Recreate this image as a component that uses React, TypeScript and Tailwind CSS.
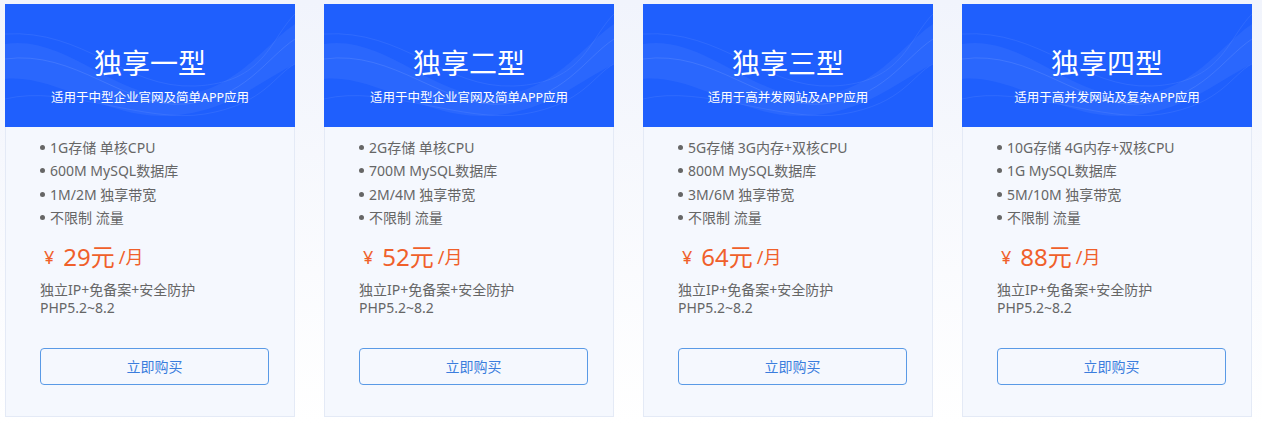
import React from "react";

interface Plan {
  name: string;
  desc: string;
  specs: string[];
  price: string;
}

const plans: Plan[] = [
  {
    name: "独享一型",
    desc: "适用于中型企业官网及简单APP应用",
    specs: ["1G存储 单核CPU", "600M MySQL数据库", "1M/2M 独享带宽", "不限制 流量"],
    price: "29",
  },
  {
    name: "独享二型",
    desc: "适用于中型企业官网及简单APP应用",
    specs: ["2G存储 单核CPU", "700M MySQL数据库", "2M/4M 独享带宽", "不限制 流量"],
    price: "52",
  },
  {
    name: "独享三型",
    desc: "适用于高并发网站及APP应用",
    specs: ["5G存储 3G内存+双核CPU", "800M MySQL数据库", "3M/6M 独享带宽", "不限制 流量"],
    price: "64",
  },
  {
    name: "独享四型",
    desc: "适用于高并发网站及复杂APP应用",
    specs: ["10G存储 4G内存+双核CPU", "1G MySQL数据库", "5M/10M 独享带宽", "不限制 流量"],
    price: "88",
  },
];

// faint light waves across the blue header
function Waves() {
  return (
    <svg
      className="absolute inset-0 h-full w-full"
      viewBox="0 0 290 123"
      preserveAspectRatio="none"
    >
      <path
        d="M0 40 C 60 30, 110 95, 170 92 S 260 40, 290 20 L290 60 C 250 80, 220 110, 160 112 S 50 70, 0 75 Z"
        fill="#ffffff"
        opacity="0.05"
      />
      <path
        d="M0 55 C 70 45, 120 105, 180 100 S 260 55, 290 35"
        stroke="#ffffff"
        strokeWidth="1"
        fill="none"
        opacity="0.1"
      />
      <path
        d="M0 30 C 80 25, 120 85, 190 82 S 265 35, 290 10"
        stroke="#ffffff"
        strokeWidth="1"
        fill="none"
        opacity="0.07"
      />
      <path
        d="M0 95 C 60 80, 140 120, 200 110 S 270 70, 290 60"
        fill="none"
        stroke="#ffffff"
        strokeWidth="1"
        opacity="0.07"
      />
    </svg>
  );
}

export default function App() {
  return (
    <div
      className="h-[424px] w-[1262px] bg-gradient-to-b from-[#f1f4fc] to-white pl-[5px] pt-[4px]"
      style={{ fontFamily: '"Noto Sans", "Noto Sans CJK SC", sans-serif' }}
    >
      <div className="flex gap-[29px]">
        {plans.map((plan) => (
          <div
            key={plan.name}
            className="w-[290px] border border-t-0 border-[#e4eaf6] bg-[#f5f8fe]"
          >
            {/* header */}
            <div className="relative -mx-px flex h-[123px] flex-col items-center overflow-hidden bg-[#1f5ffd] text-white">
              <Waves />
              <div className="relative mt-[42px] text-[28px] leading-[34px]">
                {plan.name}
              </div>
              <div className="relative mt-[10px] text-[12.5px] leading-[16px]">
                {plan.desc}
              </div>
            </div>

            {/* body */}
            <div className="pl-[34px] pt-[9px] pb-[31px]">
              <ul className="text-[14px] leading-[23.3px] text-[#666]">
                {plan.specs.map((s) => (
                  <li key={s} className="flex items-center">
                    <span className="mr-[5px] h-[5px] w-[5px] rounded-full bg-[#666]"></span>
                    <span>{s}</span>
                  </li>
                ))}
              </ul>

              <div className="mt-[10px] flex h-[36px] items-center text-[#f0602b]">
                <span className="ml-[4px] text-[18px]">¥</span>
                <span className="ml-[9px] text-[24px]">{plan.price}元</span>
                <span className="ml-[4px] text-[18px]">/月</span>
              </div>

              <div className="mt-[6px] text-[14px] leading-[18px] text-[#666]">
                <div>独立IP+免备案+安全防护</div>
                <div>PHP5.2~8.2</div>
              </div>

              <button className="mt-[31px] h-[37px] w-[229px] rounded-[4px] border border-[#5a9ae6] text-[14px] text-[#3b7ddd]">
                立即购买
              </button>
            </div>
          </div>
        ))}
      </div>
    </div>
  );
}
